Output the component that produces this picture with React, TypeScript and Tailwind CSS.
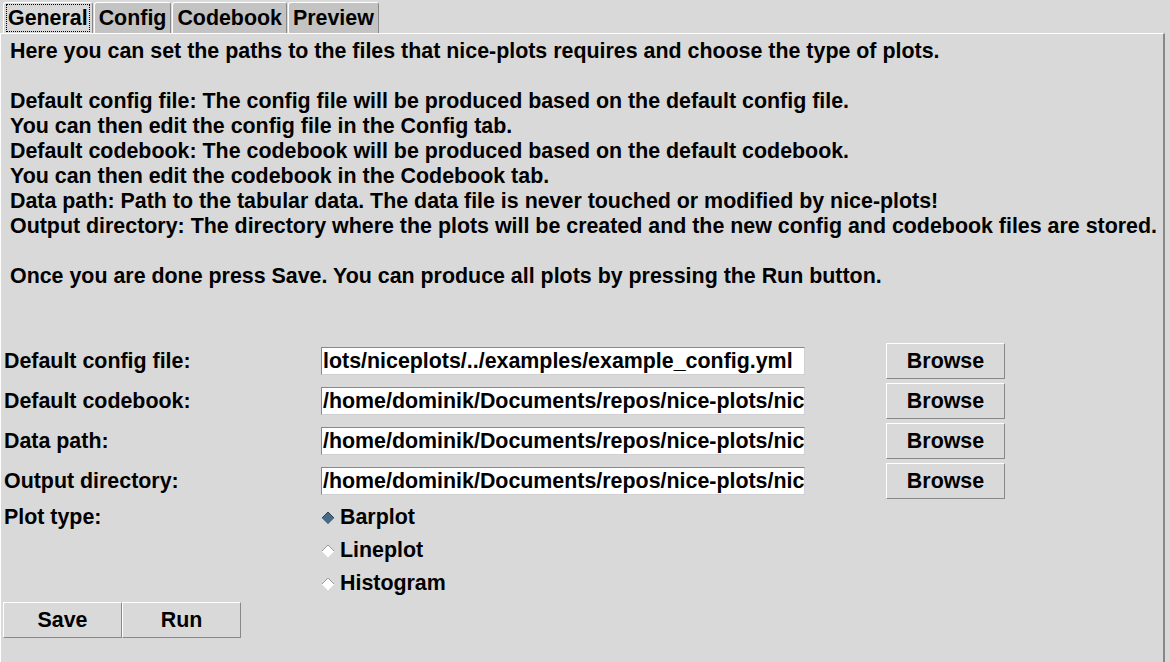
import React from "react";

const lines = [
  "Here you can set the paths to the files that nice-plots requires and choose the type of plots.",
  "",
  "Default config file: The config file will be produced based on the default config file.",
  "You can then edit the config file in the Config tab.",
  "Default codebook: The codebook will be produced based on the default codebook.",
  "You can then edit the codebook in the Codebook tab.",
  "Data path: Path to the tabular data. The data file is never touched or modified by nice-plots!",
  "Output directory: The directory where the plots will be created and the new config and codebook files are stored.",
  "",
  "Once you are done press Save. You can produce all plots by pressing the Run button.",
];

const rows = [
  ["Default config file:", "lots/niceplots/../examples/example_config.yml"],
  ["Default codebook:", "/home/dominik/Documents/repos/nice-plots/nic"],
  ["Data path:", "/home/dominik/Documents/repos/nice-plots/nic"],
  ["Output directory:", "/home/dominik/Documents/repos/nice-plots/nic"],
];

function Diamond({ on }: { on: boolean }) {
  return (
    <svg width="14" height="14" viewBox="0 0 14 14" className="block">
      <polygon points="7,1 13,7 7,13 1,7" fill={on ? "#4a6984" : "#ffffff"} />
      <polyline points="1,7 7,1 13,7" fill="none" stroke={on ? "#2d4255" : "#9a9a9a"} strokeWidth="1" />
      <polyline points="1,7 7,13 13,7" fill="none" stroke={on ? "#6b8aa5" : "#ffffff"} strokeWidth="1" />
    </svg>
  );
}

function Btn({ label, className = "" }: { label: string; className?: string }) {
  return (
    <div
      className={`flex items-center justify-center h-[36px] w-[119px] border border-t-white border-l-white border-r-[#888888] border-b-[#888888] bg-[#d9d9d9] ${className}`}
    >
      {label}
    </div>
  );
}

export default function App() {
  const tabs = ["General", "Config", "Codebook", "Preview"];
  return (
    <div className="w-[1170px] h-[662px] bg-[#d9d9d9] text-black text-[21.4px] font-bold font-['Liberation_Sans',Arial,sans-serif] overflow-hidden flex flex-col">
      <div className="flex items-end h-[33px] pl-[3px] gap-[1px]">
        {tabs.map((t, i) => (
          <div
            key={t}
            className={`h-[31px] px-[3px] flex items-center rounded-t-[3px] border-t border-l border-r border-t-white border-l-white border-r-[#888888] ${
              i === 0 ? "bg-[#d9d9d9]" : "bg-[#c3c3c3]"
            }`}
          >
            <span
              className={`leading-[26px] px-[1px] ${
                i === 0 ? "outline-1 outline-dotted outline-black" : ""
              }`}
            >
              {t}
            </span>
          </div>
        ))}
      </div>
      <div className="w-[1165px] flex-1 border-t border-l border-r-2 border-t-white border-l-white border-r-[#888888] flex flex-col">
        <div className="pl-[9px] pt-[5px] leading-[25px]">
          {lines.map((l, i) => (
            <div key={i} className="h-[25px] whitespace-nowrap">
              {l}
            </div>
          ))}
        </div>
        <div className="mt-[52px] pl-[3px] grid grid-cols-[317px_565px_auto]">
          {rows.map(([label, val]) => (
            <React.Fragment key={label}>
              <div className="h-[40px] flex items-center">{label}</div>
              <div className="h-[40px] flex items-center">
                <div className="w-[484px] h-[28px] bg-white border border-t-[#888888] border-l-[#888888] border-r-[#d0d0d0] border-b-[#d0d0d0] overflow-hidden whitespace-nowrap pl-[1px] leading-[26px]">
                  {val}
                </div>
              </div>
              <div className="h-[40px] flex items-center">
                <Btn label="Browse" />
              </div>
            </React.Fragment>
          ))}
          <div className="h-[33px] flex items-center">Plot type:</div>
          <div className="flex flex-col">
            {["Barplot", "Lineplot", "Histogram"].map((r, i) => (
              <div key={r} className="h-[33px] flex items-center gap-[5px]">
                <Diamond on={i === 0} />
                <span>{r}</span>
              </div>
            ))}
          </div>
          <div />
        </div>
        <div className="flex pl-[2px] mt-[2px]">
          <Btn label="Save" />
          <Btn label="Run" />
        </div>
      </div>
    </div>
  );
}
